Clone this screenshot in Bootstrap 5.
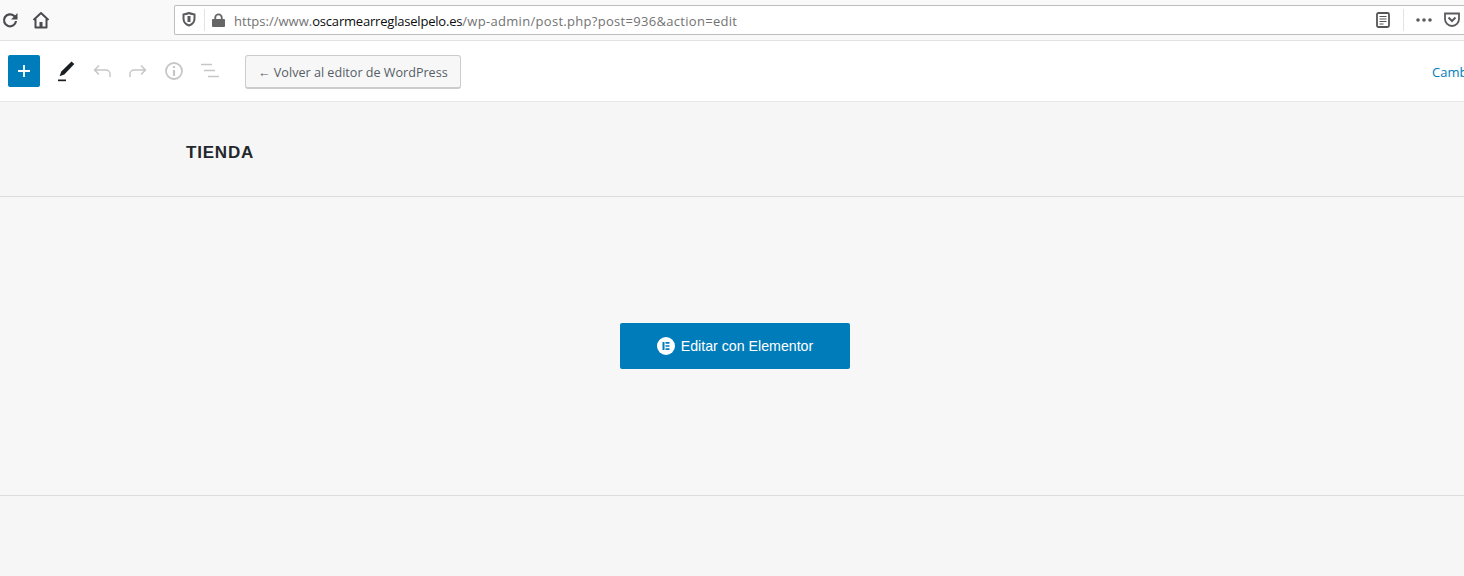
<!DOCTYPE html>
<html lang="es">
<head>
<meta charset="utf-8">
<title>TIENDA</title>
<link href="https://cdn.jsdelivr.net/npm/bootstrap@5.3.0/dist/css/bootstrap.min.css" rel="stylesheet">
<style>
html,body{height:576px;overflow:hidden}
body{background:#f6f6f6;font-family:"Liberation Sans",Arial,sans-serif}
.ff-bar{height:41px;background:#f9f9fa;border-bottom:1px solid #e1e1e2;padding-left:1px;overflow:hidden}
.ff-nav{width:173px;gap:13px}
.ff-url{flex:1 0 auto;height:30px;margin-top:-1px;background:#fff;border:1px solid #bebebe;border-right:0;border-radius:2px 0 0 2px;padding-left:7px;min-width:0}
.ff-sep{width:1px;height:22px;background:#e3e3e4}
.ff-text{font-family:"Open Sans",sans-serif;font-size:13px;color:#737373;margin-left:9px;white-space:nowrap;letter-spacing:.3px;line-height:1;padding-top:3px}
.ff-proto{letter-spacing:.02px}
.ff-text b{font-weight:400;color:#0c0c0d;letter-spacing:-.2px}
.ff-lock{margin-left:-1px}
.ff-end{margin-right:4px}
.ff-reader{margin-right:13px}
.ff-dots{margin:0 12px 0 12px}
.wp-bar{height:61px;background:#fff;border-bottom:1px solid #e8e8e8;padding-left:8px;overflow:hidden}
.wp-add{width:32px;height:32px;background:#007cba;border-radius:2px;padding:0;border:0}
.wp-tools{margin-left:8px}
.wp-tool{width:36px;height:36px;display:flex;align-items:center;justify-content:center}
.wp-back{margin-left:17px;margin-top:1px;height:34px;padding:4px 12px 0;font-family:"Open Sans",sans-serif;font-size:12.6px;color:#555d66;background:#f7f7f7;border:1px solid #ccc;border-bottom-width:2px;border-radius:3px;white-space:nowrap;line-height:1}
.wp-switch{font-family:"Open Sans",sans-serif;font-size:13px;color:#007cba;white-space:nowrap;width:32px;overflow:hidden;padding-top:4px}
.doc-title{height:95px;padding-left:186px;border-bottom:1px solid #ddd;padding-top:40px;font-size:17px;font-weight:700;letter-spacing:.8px;color:#23282d;line-height:22px}
.doc-main{height:299px;background:#f7f7f7;border-bottom:1px solid #ddd;padding-left:620px;padding-top:126px}
.el-btn{width:230px;height:46px;background:#007cba;color:#fff;font-size:14.2px;border-radius:2px;border:0;gap:6px;padding:0}
.el-label{padding-top:2px}
</style>
</head>
<body>
<div class="ff-bar d-flex align-items-center">
  <div class="ff-nav d-flex align-items-center">
    <svg width="18" height="18" viewBox="0 0 18 18" fill="none" stroke="#4a4a4f" stroke-width="2.200"><path d="M15 10a6 6 0 1 1-1.800-5L15.500 7.500"/><path d="M16.500 2v6.500H10z" fill="#4a4a4f" stroke="none"/></svg>
    <svg width="18" height="18" viewBox="0 0 18 18" fill="none" stroke="#4a4a4f" stroke-width="2" stroke-linejoin="round"><path d="M1.500 9L9 2l7.500 7"/><path d="M3.500 8v8.500h11V8"/><rect x="7.500" y="11" width="3" height="5.500" fill="#4a4a4f" stroke="none"/></svg>
  </div>
  <div class="ff-url d-flex align-items-center">
    <svg width="14" height="15" viewBox="0 0 14 15" fill="none" stroke="#5b5b5f" stroke-width="2"><path d="M1.500 2.500C4 2 5.500 1.800 7 1c1.500.8 3 1 5.500 1.500v4c0 3.500-2.500 6-5.500 7-3-1-5.500-3.500-5.500-7z"/><path d="M7 4v6" stroke-width="3"/></svg>
    <span class="ff-sep mx-2"></span>
    <svg class="ff-lock flex-shrink-0" width="13" height="14" viewBox="0 0 14 15"><path fill="#666" d="M1 6.500h1.500V5a4.500 4.500 0 0 1 9 0v1.500H13a1 1 0 0 1 1 1V14a1 1 0 0 1-1 1H1a1 1 0 0 1-1-1V7.500a1 1 0 0 1 1-1zM4.500 6.500h5V5a2.500 2.500 0 0 0-5 0z"/></svg>
    <span class="ff-text"><span class="ff-proto">https://www.</span><b>oscarmearreglaselpelo.es</b>/wp-admin/post.php?post=936&amp;action=edit</span>
    <div class="ms-auto ff-end d-flex align-items-center">
      <svg class="ff-reader" width="14" height="16" viewBox="0 0 14 16" fill="none" stroke="#555" stroke-width="1.800"><rect x="1" y="1" width="12" height="14" rx="1.500"/><path d="M3.500 4.500h7M3.500 7h7M3.500 9.500h7M3.500 12h4" stroke-width="1"/></svg>
      <span class="ff-sep"></span>
      <svg class="ff-dots" width="16" height="4" viewBox="0 0 16 4" fill="#5b5b5f"><circle cx="2" cy="2" r="1.800"/><circle cx="8" cy="2" r="1.800"/><circle cx="14" cy="2" r="1.800"/></svg>
      <svg width="16" height="15" viewBox="0 0 16 15" fill="none" stroke="#5b5b5f" stroke-width="1.800"><path d="M1 1.500h14v5.500a7 7 0 0 1-14 0z"/><path d="M4.500 5.500L8 9l3.500-3.500" stroke-width="2"/></svg>
    </div>
  </div>
</div>
<div class="wp-bar d-flex align-items-center">
  <button class="wp-add d-flex align-items-center justify-content-center" aria-label="Añadir">
    <svg width="16" height="16" viewBox="0 0 16 16" stroke="#fff" stroke-width="1.800"><path d="M8 2v12M2 8h12"/></svg>
  </button>
  <div class="wp-tools d-flex align-items-center">
    <div class="wp-tool"><svg width="20" height="24" viewBox="0 0 20 24"><path fill="#191e23" d="M15.500 2.500l2.800 2.500-10 10.500-4.800 1.800 1.800-4.800z"/><rect x="2" y="20.500" width="8" height="1.700" fill="#191e23"/></svg></div>
    <div class="wp-tool"><svg width="20" height="20" viewBox="0 0 20 20" fill="none" stroke="#c5c6c8" stroke-width="1.500"><path d="M7 4.500L2.500 9 7 13.500M2.500 9H14a4 4 0 0 1 4 4v3"/></svg></div>
    <div class="wp-tool"><svg width="20" height="20" viewBox="0 0 20 20" fill="none" stroke="#c5c6c8" stroke-width="1.500"><path d="M13 4.500L17.500 9 13 13.500M17.500 9H6a4 4 0 0 0-4 4v3"/></svg></div>
    <div class="wp-tool"><svg width="20" height="20" viewBox="0 0 20 20" fill="none" stroke="#c5c6c8" stroke-width="1.800"><circle cx="10" cy="10" r="8"/><path d="M10 9v6" stroke-width="2.200"/><path d="M10 5v2" stroke-width="2.200"/></svg></div>
    <div class="wp-tool"><svg width="20" height="16" viewBox="0 0 20 16" stroke="#c5c6c8" stroke-width="1.600"><path d="M1 1.500h11M4 7.500h11M8 13.500h11"/></svg></div>
  </div>
  <button class="wp-back">← Volver al editor de WordPress</button>
  <span class="wp-switch ms-auto">Cambiar</span>
</div>
<div class="doc-title">TIENDA</div>
<div class="doc-main">
  <button class="el-btn d-flex align-items-center justify-content-center">
    <svg width="18" height="18" viewBox="0 0 18 18"><circle cx="9" cy="9" r="9" fill="#fff"/><path fill="#007cba" d="M5.500 5h2v8h-2zM8.500 5H12.500v1.700H8.500zM8.500 8.150H12.500v1.700H8.500zM8.500 11.300H12.500V13H8.500z"/></svg>
    <span class="el-label">Editar con Elementor</span>
  </button>
</div>
<script src="https://cdn.jsdelivr.net/npm/bootstrap@5.3.0/dist/js/bootstrap.bundle.min.js"></script>
</body>
</html>
